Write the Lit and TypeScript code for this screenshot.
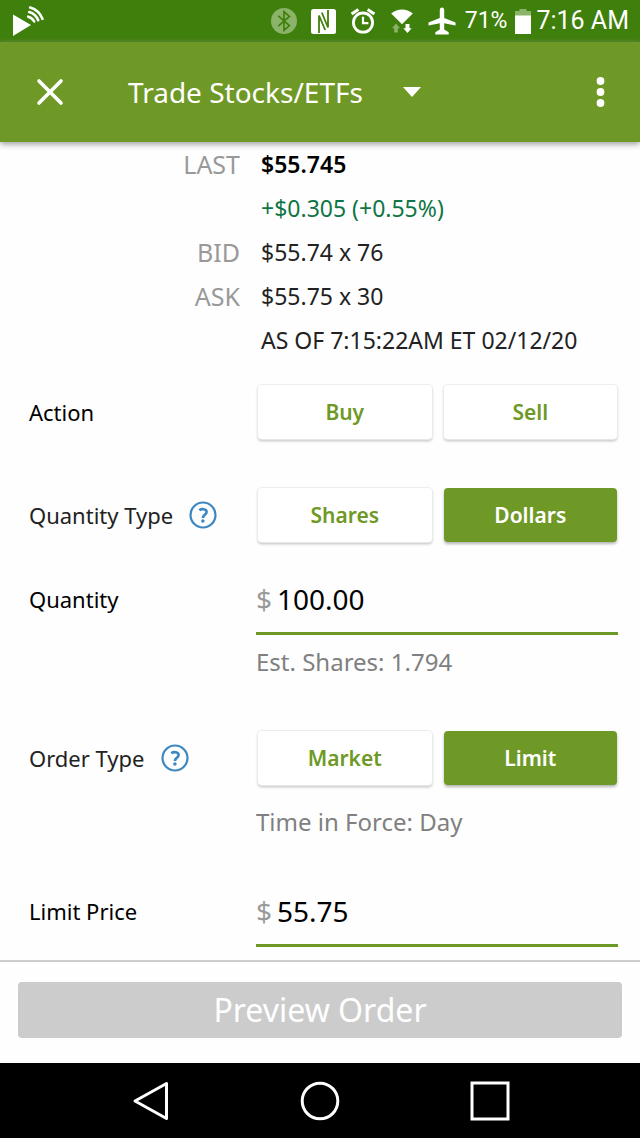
import { LitElement, html, css, svg } from "lit";
import { customElement, property, state } from "lit/decorators.js";
import { classMap } from "lit/directives/class-map.js";

@customElement("status-bar")
class StatusBar extends LitElement {
  static styles = css`
    :host {
      display: flex;
      align-items: center;
      height: 42px;
      padding: 0 11px 0 12px;
      background: #3f7f0b;
      color: #fff;
      font: 25px/42px Roboto, "Noto Sans", sans-serif;
    }
    svg {
      display: block;
      flex: none;
    }
    .left {
      flex: 1;
    }
    .icons {
      display: flex;
      align-items: center;
      gap: 14px;
    }
    .percent {
      font-size: 23px;
      padding: 0 8px 0 9px;
    }
    .time {
      padding-left: 5px;
    }
  `;

  render() {
    return html`
      <div class="left">
        <svg width="32" height="32" viewBox="0 0 32 32" fill="none" stroke="#fff" stroke-width="2.6" stroke-linecap="round">
          <path d="M1 9.5 19 20 1 31z" fill="#fff" stroke="none" />
          <path d="M16.2 11.7a9.5 9.5 0 0 1 6 4.8" />
          <path d="M17.2 7a14 14 0 0 1 9 8.2" />
          <path d="M18.2 2.5a19 19 0 0 1 12.2 11.3" />
        </svg>
      </div>
      <div class="icons">
        <svg width="26" height="26" viewBox="0 0 26 26" fill="none">
          <circle cx="13" cy="13" r="13" fill="#8bb36a" />
          <path d="M7.3 7.8 18.4 17.6 13 22.4V3.6l5.4 4.8L7.3 18.2" stroke="#3f7f0b" stroke-width="1.7" />
        </svg>
        <svg width="25" height="25" viewBox="0 0 25 25">
          <rect width="25" height="25" rx="2.5" fill="#fff" />
          <path d="M8 24V6.5L14.2 21M10.800 3.500 17 18.500V1" fill="none" stroke="#3f7f0b" stroke-width="1.800" />
        </svg>
        <svg width="26" height="26" viewBox="0 0 26 26" fill="none" stroke="#fff">
          <circle cx="13" cy="14.6" r="9.6" stroke-width="2.8" />
          <path d="M13 8.8v6.4h5.4" stroke-width="2.2" />
          <path d="M1.6 6 8.4 1.4M24.4 6l-6.8-4.6" stroke-width="3" />
        </svg>
        <svg width="24" height="26" viewBox="0 0 24 26" fill="#fff">
          <path d="M1.2 5.6C7.5.2 16.5.2 22.8 5.6L12 16.2z" />
          <path d="M6 15.5 10 20.3H7.8V24.5H4.2V20.3H2z" fill="#8bb36a" />
          <path d="M17.5 25 13.3 20.2h2.2V16h4v4.2h2.2z" />
        </svg>
        <svg width="28" height="28" viewBox="0 0 28 28" fill="#fff">
          <path d="M14 .5c1.4 0 2.2 1.2 2.2 2.7v7.7L27.5 15.5v3l-11.3-2.2v6.3l4.5 2.7v2.2H7.3v-2.2l4.5-2.7v-6.3L.5 18.5v-3L11.8 10.9V3.2C11.8 1.7 12.6.5 14 .5z" />
        </svg>
      </div>
      <span class="percent">71%</span>
      <svg width="16" height="25" viewBox="0 0 16 25">
        <path d="M4.5 0h7v2H16v6H0V2h4.5z" fill="#8bb36a" />
        <path d="M0 6.5h16V25H0z" fill="#fff" />
      </svg>
      <span class="time">7:16 AM</span>
    `;
  }
}

@customElement("segment-pair")
class SegmentPair extends LitElement {
  @property({ type: Array }) options: string[] = [];
  @property() selected = "";
  @property() label = "";

  static styles = css`
    .pair {
      display: grid;
      grid-template-columns: 1fr 1fr;
      gap: 12px;
      padding: 0 1px 0 2px;
    }
    button {
      height: 54px;
      margin: 0;
      padding: 0;
      border: 0;
      border-radius: 4px;
      background: #fff;
      color: #6f9926;
      font: 600 21px/54px "Noto Sans", sans-serif;
      box-shadow: 0 0 1px 1px #ececec, 0 2px 3px #bbb;
    }
    button.on {
      background: #6f9926;
      color: #fff;
      box-shadow: 0 2px 3px #b4b4b4;
    }
  `;

  render() {
    return html`<div class="pair" role="group" aria-label=${this.label}>
      ${this.options.map(
        (o) => html`<button
          type="button"
          class=${classMap({ on: o === this.selected })}
          aria-pressed=${o === this.selected}
          @click=${() => (this.selected = o)}
        >${o}</button>`
      )}
    </div>`;
  }
}

const help = (about: string) => html`<button class="help" type="button" aria-label="Help: ${about}">
  <svg width="28" height="28" viewBox="0 0 28 28" fill="none" stroke="#3d87c0">
    <circle cx="14" cy="14" r="12.5" stroke-width="2.2" />
    <path d="M10.3 9.3C12.5 7.5 17.6 7.7 17.6 11c0 2.8-3.7 2.9-3.7 6" stroke-width="2.6" />
    <circle cx="13.9" cy="20" r="1.8" fill="#3d87c0" stroke="none" />
  </svg>
</button>`;

@customElement("app-root")
class AppRoot extends LitElement {
  @state() private quantity = "100.00";
  @state() private limit = "55.75";

  static styles = css`
    :host {
      display: flex;
      flex-direction: column;
      min-height: 100vh;
      background: #fefefe;
      color: #222;
      font: 22px/30px "Noto Sans", sans-serif;
    }
    svg {
      display: block;
    }
    button {
      margin: 0;
      padding: 0;
      border: 0;
      background: none;
      font: inherit;
      color: inherit;
    }
    .bar {
      display: flex;
      align-items: center;
      height: 100px;
      padding: 0 32px 0 36px;
      background: #6f9926;
      color: #fff;
      box-shadow: 0 2px 6px #999;
    }
    .picker {
      display: flex;
      align-items: center;
      gap: 40px;
      margin-left: 64px;
      font-size: 28px;
      line-height: 40px;
    }
    .more {
      margin-left: auto;
    }
    .quote {
      display: grid;
      grid-template-columns: 240px 1fr;
      column-gap: 21px;
      margin: 0;
      font-size: 23px;
      line-height: 44px;
    }
    dt {
      text-align: right;
      color: #999;
      font-size: 25px;
    }
    dd {
      grid-column: 2;
      margin: 0;
    }
    .last {
      font-weight: 600;
      color: #000;
    }
    .gain {
      color: #0e7545;
    }
    .form {
      flex: 1;
      display: grid;
      grid-template-columns: 227px minmax(0, 1fr);
      align-content: start;
      padding: 23px 22px 12px 29px;
    }
    .name {
      display: flex;
      align-items: center;
      gap: 16px;
      height: 54px;
    }
    label.name {
      height: 50px;
    }
    .plain {
      color: #000;
    }
    .row-gap {
      grid-column: 1 / -1;
      height: 49px;
    }
    .row-gap.small {
      height: 32px;
    }
    .money {
      display: flex;
      align-items: center;
      gap: 5px;
      height: 50px;
      padding-bottom: 8px;
      border-bottom: 3px solid #6f9926;
      font-size: 28px;
      color: #999;
    }
    .money input {
      flex: 1;
      min-width: 0;
      margin: 0;
      padding: 0;
      border: 0;
      outline: 0;
      background: none;
      color: #000;
      font: 28px/40px "Noto Sans", sans-serif;
    }
    .hint {
      grid-column: 2;
      color: #808080;
      font-size: 24px;
      line-height: 32px;
      padding: 11px 0 53px;
    }
    .hint.tif {
      padding: 21px 0 48px;
    }
    .footer {
      padding: 20px 18px 25px;
      border-top: 2px solid #ccc;
    }
    .preview {
      display: block;
      width: 100%;
      height: 56px;
      border-radius: 4px;
      background: #ccc;
      color: #fff;
      font-size: 32px;
      line-height: 56px;
    }
    .nav {
      display: flex;
      justify-content: center;
      align-items: center;
      gap: 130px;
      height: 75px;
      background: #000;
    }
  `;

  render() {
    return html`
      <status-bar></status-bar>
      <header class="bar">
        <button type="button" aria-label="Close">
          <svg width="28" height="28" viewBox="0 0 28 28" stroke="#fff" stroke-width="3.6" stroke-linecap="round">
            <path d="M3 3 25 25M25 3 3 25" />
          </svg>
        </button>
        <button type="button" class="picker">
          Trade Stocks/ETFs
          <svg width="18" height="10" viewBox="0 0 18 10"><path d="M0 0h18l-9 10z" fill="#fff" /></svg>
        </button>
        <button type="button" class="more" aria-label="More options">
          <svg width="15" height="30" viewBox="0 0 15 30" fill="#fff">
            ${[4, 15, 26].map((y) => svg`<circle cx="7.5" cy=${y} r="3.9" />`)}
          </svg>
        </button>
      </header>

      <dl class="quote">
        <dt>LAST</dt>
        <dd class="last">$55.745</dd>
        <dd class="gain">+$0.305 (+0.55%)</dd>
        <dt>BID</dt>
        <dd>$55.74 x 76</dd>
        <dt>ASK</dt>
        <dd>$55.75 x 30</dd>
        <dd>AS OF 7:15:22AM ET 02/12/20</dd>
      </dl>

      <form class="form">
        <span class="name plain">Action</span>
        <segment-pair label="Action" .options=${["Buy", "Sell"]}></segment-pair>
        <div class="row-gap"></div>

        <span class="name">Quantity Type ${help("Quantity Type")}</span>
        <segment-pair label="Quantity Type" .options=${["Shares", "Dollars"]} selected="Dollars"></segment-pair>
        <div class="row-gap small"></div>

        <label class="name plain" for="quantity">Quantity</label>
        <div class="money">
          <span>$</span>
          <input id="quantity" inputmode="decimal" .value=${this.quantity}
            @input=${(e: Event) => (this.quantity = (e.target as HTMLInputElement).value)} />
        </div>
        <div class="hint">Est. Shares: 1.794</div>

        <span class="name">Order Type ${help("Order Type")}</span>
        <segment-pair label="Order Type" .options=${["Market", "Limit"]} selected="Limit"></segment-pair>
        <div class="hint tif">Time in Force: Day</div>

        <label class="name plain" for="limit">Limit Price</label>
        <div class="money">
          <span>$</span>
          <input id="limit" inputmode="decimal" .value=${this.limit}
            @input=${(e: Event) => (this.limit = (e.target as HTMLInputElement).value)} />
        </div>
      </form>

      <footer class="footer">
        <button type="button" class="preview">Preview Order</button>
      </footer>

      <nav class="nav">
        <button type="button" aria-label="Back">
          <svg width="40" height="40" viewBox="0 0 40 40" fill="none" stroke="#fff" stroke-width="3" stroke-linejoin="round">
            <path d="M36.5 2.5v35L5 20z" />
          </svg>
        </button>
        <button type="button" aria-label="Home">
          <svg width="40" height="40" viewBox="0 0 40 40" fill="none" stroke="#fff" stroke-width="3">
            <circle cx="20" cy="20" r="17.8" />
          </svg>
        </button>
        <button type="button" aria-label="Recent apps">
          <svg width="40" height="40" viewBox="0 0 40 40" fill="none" stroke="#fff" stroke-width="3">
            <rect x="2" y="2" width="36" height="36" />
          </svg>
        </button>
      </nav>
    `;
  }
}
